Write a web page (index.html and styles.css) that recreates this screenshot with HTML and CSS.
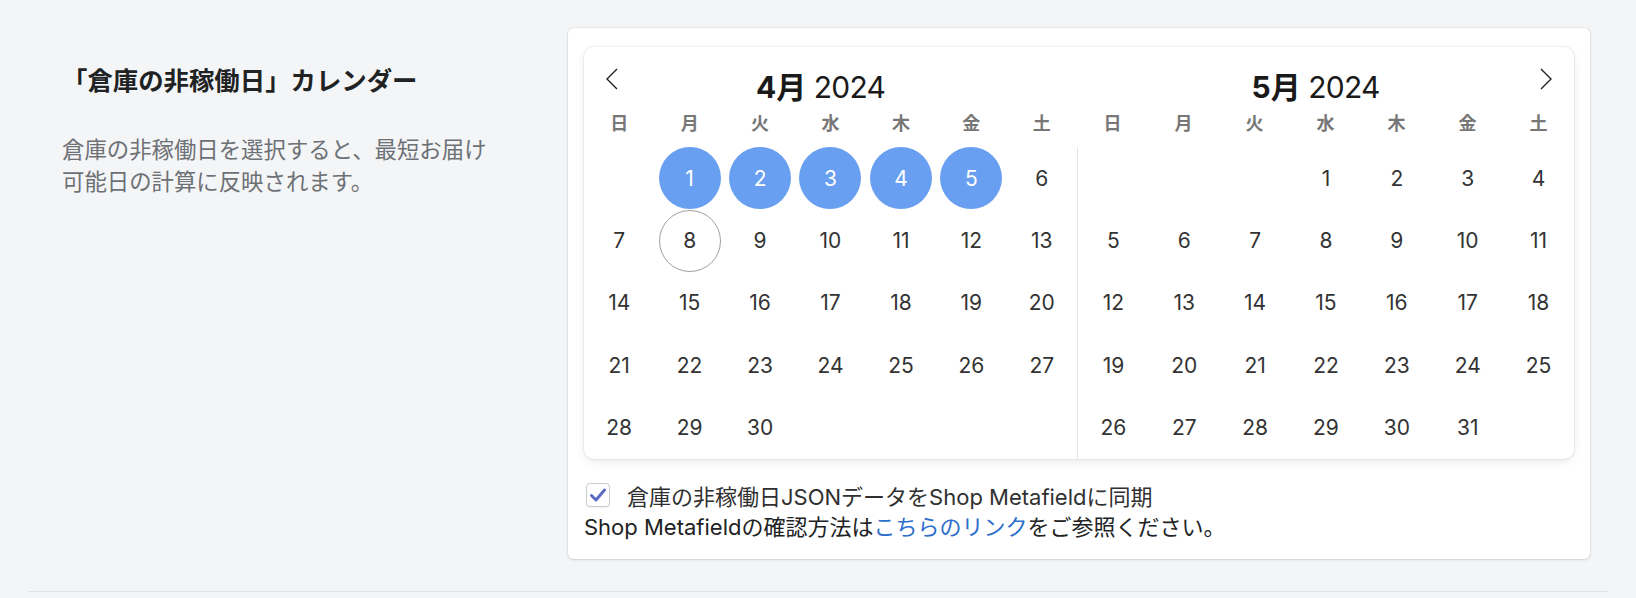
FILE: index.html
```html
<!DOCTYPE html>
<html lang="ja">
<head>
  <meta charset="UTF-8">
  <meta name="viewport" content="width=device-width, initial-scale=1.0">
  <title>倉庫の非稼働日カレンダー</title>
  <link rel="stylesheet" href="styles.css">
</head>
<body>

  <div class="section"> <!-- 設定セクション -->
    <div class="annotation"> <!-- 左側の説明 -->
      <h2 class="annotation-title">「倉庫の非稼働日」カレンダー</h2>
      <p class="annotation-text">倉庫の非稼働日を選択すると、最短お届け可能日の計算に反映されます。</p>
    </div>

    <div class="card"> <!-- 右側のカード -->
      <div class="calendar">
        <button class="nav-btn nav-prev" aria-label="前の月">
          <svg width="12" height="22" viewBox="0 0 12 22"><polyline points="11,1 1,11 11,21"/></svg>
        </button>
        <button class="nav-btn nav-next" aria-label="次の月">
          <svg width="12" height="22" viewBox="0 0 12 22"><polyline points="1,1 11,11 1,21"/></svg>
        </button>

        <div class="month month-left"> <!-- 4月 -->
          <div class="month-title"><b>4月</b> 2024</div>
          <div class="weekdays"><span>日</span><span>月</span><span>火</span><span>水</span><span>木</span><span>金</span><span>土</span></div>
          <div class="days">
            <span></span><span class="sel">1</span><span class="sel">2</span><span class="sel">3</span><span class="sel">4</span><span class="sel">5</span><span>6</span>
            <span>7</span><span class="today">8</span><span>9</span><span>10</span><span>11</span><span>12</span><span>13</span>
            <span>14</span><span>15</span><span>16</span><span>17</span><span>18</span><span>19</span><span>20</span>
            <span>21</span><span>22</span><span>23</span><span>24</span><span>25</span><span>26</span><span>27</span>
            <span>28</span><span>29</span><span>30</span>
          </div>
        </div>

        <div class="month"> <!-- 5月 -->
          <div class="month-title"><b>5月</b> 2024</div>
          <div class="weekdays"><span>日</span><span>月</span><span>火</span><span>水</span><span>木</span><span>金</span><span>土</span></div>
          <div class="days days-right">
            <span></span><span></span><span></span><span>1</span><span>2</span><span>3</span><span>4</span>
            <span>5</span><span>6</span><span>7</span><span>8</span><span>9</span><span>10</span><span>11</span>
            <span>12</span><span>13</span><span>14</span><span>15</span><span>16</span><span>17</span><span>18</span>
            <span>19</span><span>20</span><span>21</span><span>22</span><span>23</span><span>24</span><span>25</span>
            <span>26</span><span>27</span><span>28</span><span>29</span><span>30</span><span>31</span>
          </div>
        </div>
      </div>

      <label class="sync-row">
        <span class="checkbox">
          <svg width="24" height="24" viewBox="0 0 24 24"><polyline points="5.5,12.5 10,17 18.5,7"/></svg>
        </span>
        <span>倉庫の非稼働日JSONデータをShop Metafieldに同期</span>
      </label>
      <p class="sync-note">Shop Metafieldの確認方法は<a href="#">こちらのリンク</a>をご参照ください。</p>
    </div>
  </div>

</body>
</html>
```

FILE: styles.css
```css
/* 基本 */
html, body {
  margin: 0;
  padding: 0;
}
body {
  background: #f4f5f7; /* ページ背景 */
  font-family: Inter, "Noto Sans CJK JP", sans-serif;
  color: #202223;
}

/* セクション：左に説明、右にカード */
.section {
  display: flex;
  margin: 0 28px;
  padding: 28px 0 32px;
  border-bottom: 1px solid #dfe3e8; /* 下の区切り線 */
}
.annotation {
  width: 540px;
  flex-shrink: 0;
  padding: 37px 0 0 34px;
  box-sizing: border-box;
}
.annotation-title {
  margin: 0;
  font-size: 25.4px;
  line-height: 32px;
  font-weight: 700;
  color: #202223;
}
.annotation-text {
  margin: 37px 0 0;
  width: 434px;
  font-size: 22.4px;
  line-height: 32px;
  color: #6d7175;
}

/* カード */
.card {
  width: 1022px;
  box-sizing: border-box;
  padding: 19px 16px 16px;
  background: #fff;
  border-radius: 6px;
  box-shadow: 0 0 0 1px rgba(63, 63, 68, 0.05), 0 1px 3px 0 rgba(63, 63, 68, 0.15);
}

/* カレンダー本体 */
.calendar {
  position: relative;
  display: flex;
  border-radius: 10px;
  background: #fff;
  box-shadow: 0 0 0 1px rgba(0, 0, 0, 0.05), 0 3px 10px rgba(0, 0, 0, 0.08);
}
.nav-btn { /* 前月・次月の矢印 */
  position: absolute;
  top: 21px;
  width: 12px;
  height: 22px;
  padding: 0;
  border: none;
  background: none;
  cursor: pointer;
}
.nav-btn svg {
  display: block;
  fill: none;
  stroke: #222;
  stroke-width: 1.4;
}
.nav-prev { left: 22px; }
.nav-next { right: 22px; }

.month {
  flex: 1;
}
.month-left {
  flex: 0 0 493px;
}
.month-title {
  padding: 20px 20px 0 0;
  height: 40px;
  line-height: 40px;
  text-align: center;
  font-size: 30px;
  letter-spacing: -0.8px;
  color: #1a1a1a;
}
.month-title b {
  font-weight: 700;
  letter-spacing: 0;
}
.weekdays {
  display: grid;
  grid-template-columns: repeat(7, 1fr);
  height: 34px;
  line-height: 34px;
  margin-bottom: 6px;
  text-align: center;
  font-size: 18px;
  font-weight: 700;
  color: #777;
}
.days {
  display: grid;
  grid-template-columns: repeat(7, 1fr);
  grid-auto-rows: 62.4px;
  font-size: 21px;
  color: #333;
}
.days-right {
  border-left: 1px solid #e6e6e6; /* 月の区切り */
}
.days span {
  width: 62px;
  height: 62px;
  box-sizing: border-box;
  display: flex;
  align-items: center;
  justify-content: center;
  justify-self: center;
  align-self: center;
  border-radius: 50%;
}
.days .sel { /* 選択済みの非稼働日 */
  background: #699ff0;
  color: #fff;
}
.days .today { /* 今日 */
  border: 1px solid #a0a0a0;
}

/* 同期チェックボックス */
.sync-row {
  display: flex;
  align-items: center;
  height: 32px;
  margin-top: 20px;
  font-size: 22px;
  color: #303030;
}
.checkbox {
  width: 24px;
  height: 24px;
  box-sizing: border-box;
  margin: 0 17px 0 2px;
  border: 1px solid #c9ccd4;
  border-radius: 4px;
  background: #fff;
  box-shadow: 0 1px 1px rgba(0, 0, 0, 0.06);
}
.checkbox svg {
  display: block;
  margin: -1px;
  fill: none;
  stroke: #5c6ac4;
  stroke-width: 3;
  stroke-linecap: round;
  stroke-linejoin: round;
}
.sync-note {
  margin: 0;
  font-size: 22px;
  line-height: 32px;
  color: #202223;
}
.sync-note a {
  color: #2c6ecb;
  text-decoration: none;
}
```
